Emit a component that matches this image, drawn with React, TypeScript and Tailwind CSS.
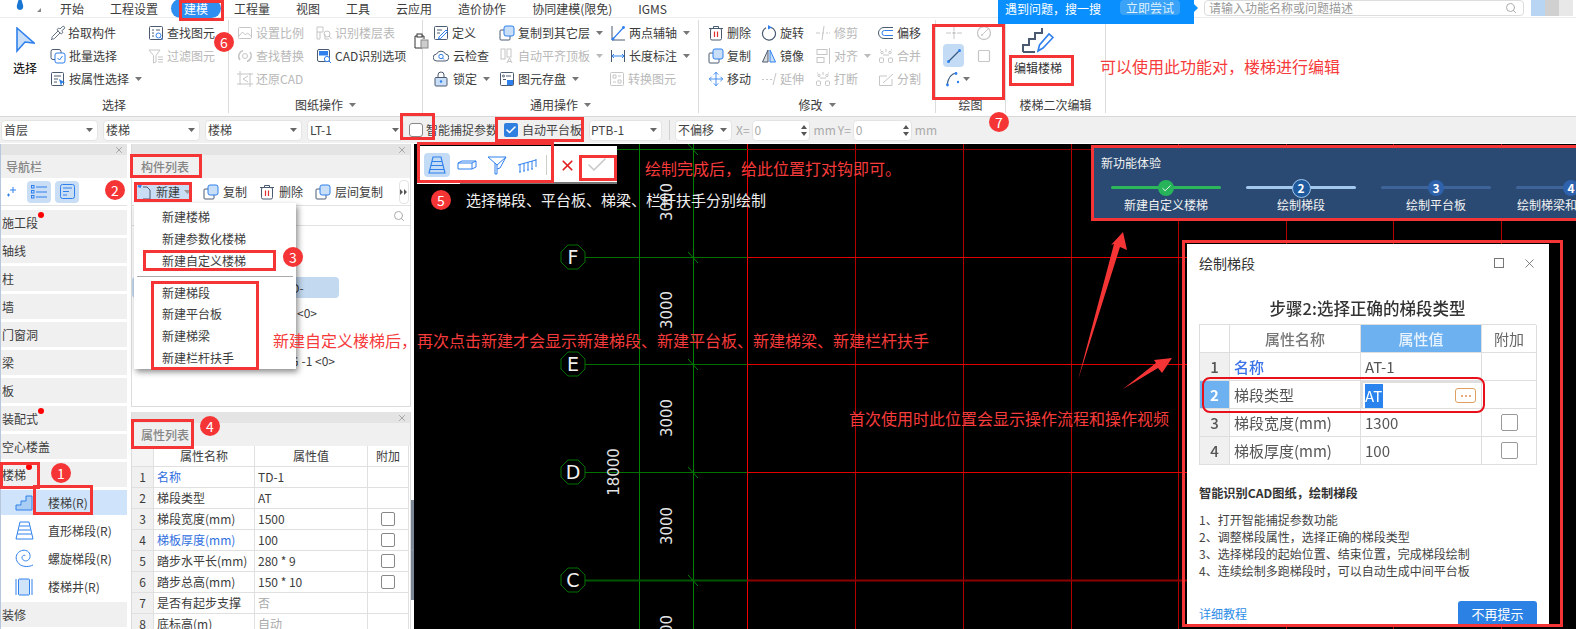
import React from "react";
import { Pipette, Search, X, Check, Move, ChevronRight } from "lucide-react";

const D = "#4a5a70";
const B = "#2f80ed";
const L = "#c9dff8";
const G = "#c6c6c6";

function S({ children, w = 16, h = 16 }: { children?: React.ReactNode; w?: number; h?: number }) {
  return (
    <svg width={w} height={h} viewBox={`0 0 ${w} ${h}`} fill="none" strokeWidth={1} className="shrink-0">
      {children}
    </svg>
  );
}

function Caret({ c = "#777" }: { c?: string }) {
  return (
    <svg width="7" height="4" viewBox="0 0 7 4" className="shrink-0">
      <path d="M0 0h7L3.5 4z" fill={c} />
    </svg>
  );
}

const icons: Record<string, React.ReactNode> = {
  pick: <Pipette size={16} strokeWidth={1.3} color={D} />,
  batch: (
    <S>
      <rect x="1" y="1.5" width="10" height="10" rx="2" stroke={D} />
      <rect x="5" y="5" width="10" height="10" rx="2" stroke={B} fill="#fff" />
      <path d="M7.5 10l2 2 3-4" stroke={B} />
    </S>
  ),
  attr: (
    <S>
      <rect x="1.5" y="1.5" width="12" height="13" rx="1" stroke={D} />
      <path d="M4 5h7M4 8h4M4 11h3" stroke={D} />
      <path d="M9 8l6 3.5-3 .5-1 3z" fill={B} />
    </S>
  ),
  find: (
    <S>
      <rect x="1.5" y="1.5" width="13" height="13" rx="1" stroke={D} />
      <path d="M4 5h2M8 5h4M4 8h2M4 11h2" stroke={D} />
      <circle cx="10.5" cy="10.5" r="2.5" stroke={B} />
      <path d="M12.5 12.5l2 2" stroke={B} />
    </S>
  ),
  filter: (
    <S>
      <path d="M1 2h11L8 7.5V14L5.5 15V7.5z" stroke={G} />
      <path d="M10 9h5M10 11.5h5M10 14h5" stroke={G} />
    </S>
  ),
  scale: (
    <S>
      <rect x="1.5" y="2.5" width="13" height="11" rx="1" stroke={G} />
      <path d="M2 11l3.5-4 3 3 2-2 4 3.5" stroke={G} />
    </S>
  ),
  replace: (
    <S>
      <path d="M3 12A6 6 0 0 1 6 2.5M13 4a6 6 0 0 1-3 9.5" stroke={G} strokeWidth="1.6" />
      <circle cx="8" cy="8" r="2.5" stroke={G} />
    </S>
  ),
  restore: (
    <S>
      <path d="M3 0v14M13 2v14M0 3h16M0 13h16" stroke={G} />
      <path d="M11 5L6 8l5 3" stroke={G} />
    </S>
  ),
  floors: (
    <S>
      <path d="M1 2h6v5H4v7H1zM1 7h3M9 9v5h4" stroke={G} />
      <circle cx="11" cy="9" r="3" stroke={G} />
      <path d="M13 11l2.5 3" stroke={G} />
    </S>
  ),
  cad: (
    <S>
      <rect x="1.5" y="1.5" width="12" height="12" rx="1.5" stroke={D} />
      <rect x="3" y="3" width="9" height="4.5" fill={B} />
      <circle cx="11" cy="11" r="2.6" stroke={B} fill="#fff" />
      <path d="M13 13l2 2" stroke={B} />
    </S>
  ),
  clip: (
    <S>
      <path d="M4 3H2v12h7" stroke="#333" />
      <rect x="4" y="1" width="5" height="3" stroke="#333" />
      <path d="M9 3h2v3" stroke="#333" />
      <rect x="8" y="7" width="7" height="8" fill="#ccc" stroke="#888" />
    </S>
  ),
  define: (
    <S>
      <rect x="1.5" y="1.5" width="13" height="13" rx="1" stroke={D} />
      <path d="M4 5h5M4 8h3" stroke={D} />
      <path d="M6 12l7-7 1.5 1.5-7 7-2 .5z" stroke={B} fill="#fff" />
    </S>
  ),
  cloud: (
    <S>
      <path d="M4 13a3.5 3.5 0 0 1-.5-7A5 5 0 0 1 12.5 6 3.5 3.5 0 0 1 12 13z" stroke={D} />
      <circle cx="8" cy="8.5" r="2.2" stroke={B} />
      <path d="M9.5 10l1.5 1.5" stroke={B} />
    </S>
  ),
  lock: (
    <S>
      <rect x="2" y="6.5" width="12" height="8.5" rx="1" stroke={D} fill={L} />
      <path d="M5 6.5V4a3 3 0 0 1 6 0v2.5" stroke={D} />
      <circle cx="8" cy="10.5" r="1.2" fill={B} />
    </S>
  ),
  copyLayer: (
    <S>
      <rect x="1" y="5" width="10" height="10" rx="1" stroke={D} />
      <rect x="5" y="1" width="10" height="10" rx="2" stroke={B} fill={L} />
    </S>
  ),
  align: (
    <S>
      <rect x="2" y="1" width="4" height="10" stroke={G} />
      <rect x="8" y="1" width="4" height="8" stroke={G} />
      <path d="M8 15l2.5-5 2.5 5M9 13.5h3" stroke={G} />
    </S>
  ),
  save: (
    <S>
      <rect x="1.5" y="1.5" width="13" height="13" rx="1" stroke={D} />
      <circle cx="4.5" cy="5" r="1" stroke={D} />
      <path d="M7 5h5M4 8.5h3" stroke={D} />
      <rect x="8" y="9" width="6" height="5" fill={B} />
    </S>
  ),
  axis: (
    <S>
      <path d="M2 1v14h13" stroke={D} />
      <path d="M2 15L14 2" stroke={B} strokeWidth="1.2" />
      <circle cx="3" cy="14" r="1.4" fill={B} />
      <circle cx="13.5" cy="2.5" r="1.4" fill={B} />
    </S>
  ),
  dim: (
    <S>
      <path d="M1.5 2v12M14.5 2v12" stroke={D} />
      <path d="M2 8h12M4 6L2 8l2 2M12 6l2 2-2 2" stroke={B} />
    </S>
  ),
  convert: (
    <S>
      <rect x="1.5" y="1.5" width="13" height="13" rx="1" stroke={G} />
      <path d="M4 4h3v3H4zM9 9h3v3H9zM9 5h3M4 11h3" stroke={G} />
    </S>
  ),
  del: (
    <S>
      <path d="M1 3.5h14M5.5 3V1.5h5V3" stroke={D} />
      <rect x="2.5" y="3.5" width="11" height="11.5" rx="1.5" stroke={D} />
      <path d="M6.5 6.5v5.5M9.5 6.5v5.5" stroke="#e03030" strokeWidth="1.2" />
    </S>
  ),
  rotate: (
    <S>
      <path d="M10 2.4A6.5 6.5 0 1 1 5 2.8" stroke={D} strokeWidth="1.2" />
      <path d="M7 0l4 2.4-4 2z" fill={B} />
    </S>
  ),
  mirror: (
    <S>
      <path d="M7 2L1.5 14H7z" stroke={D} fill="#ddd" />
      <path d="M9 2l5.5 12H9z" stroke={B} fill={L} />
    </S>
  ),
  trim: (
    <S>
      <path d="M1 8h4M7 8h2" stroke={G} />
      <path d="M9 1L7 15" stroke={G} />
      <path d="M11 8h4" stroke={G} strokeDasharray="2 1" />
    </S>
  ),
  extend: (
    <S>
      <path d="M1 8.5h2M5 8.5h2M9 8.5h2" stroke={G} />
      <path d="M15 2l-3 12" stroke={G} />
    </S>
  ),
  offset: (
    <S>
      <path d="M15 2.5H6a5 5 0 0 0 0 11h9" stroke={D} />
      <path d="M15 5.5H6.5a2 2 0 0 0 0 5H15" stroke={B} />
    </S>
  ),
  alignR: (
    <S>
      <rect x="2" y="1.5" width="10" height="5" stroke={G} />
      <rect x="2" y="9.5" width="7" height="5" stroke={G} />
      <path d="M14.5 0v16" stroke={G} />
    </S>
  ),
  merge: (
    <S>
      <path d="M2 2h1M13 2h1M8 1v3M5 7h6" stroke={G} />
      <rect x="1.5" y="10" width="4" height="4.5" rx="1" stroke={G} />
      <rect x="10.5" y="10" width="4" height="4.5" rx="1" stroke={G} />
      <circle cx="4" cy="4.5" r="1.2" stroke={G} />
      <circle cx="12" cy="4.5" r="1.2" stroke={G} />
    </S>
  ),
  split: (
    <S>
      <path d="M14 8v6.5H1.5V5H9" stroke={G} />
      <path d="M5 12L15 3" stroke={G} />
    </S>
  ),
  gridCross: (
    <S>
      <path d="M0 8h5M11 8h5M8 2v4M8 10v4" stroke={G} />
      <circle cx="8" cy="8" r="1.6" fill={G} />
    </S>
  ),
  gridCircle: (
    <S>
      <circle cx="8" cy="8" r="6.5" stroke={G} strokeWidth="1.3" />
      <path d="M6 10l6-6" stroke={G} />
      <circle cx="6" cy="10" r="1" fill={G} />
    </S>
  ),
  line: (
    <S>
      <path d="M2 14L14 2" stroke="#3a5a80" strokeWidth="1.2" />
      <circle cx="2.5" cy="13.5" r="1.5" fill={B} />
      <circle cx="13.5" cy="2.5" r="1.5" fill={B} />
    </S>
  ),
  rect: (
    <S>
      <path d="M2.5 3.5a1 1 0 0 1 1-1h9a1 1 0 0 1 1 1v9a1 1 0 0 1-1 1h-9a1 1 0 0 1-1-1z" stroke={G} strokeWidth="1.2" />
    </S>
  ),
  arc: (
    <S>
      <path d="M2 14C3 7 6 3 11 2" stroke="#3a5a80" strokeWidth="1.2" />
      <circle cx="2.5" cy="14" r="1.4" fill={B} />
      <circle cx="11" cy="2.5" r="1.4" fill={B} />
      <circle cx="13" cy="11" r="1.2" fill={B} />
    </S>
  ),
};

function Tool({ i, t, gray, caret, gap = 5, cls = "" }: { i: string; t: string; gray?: boolean; caret?: boolean; gap?: number; cls?: string }) {
  return (
    <div className={"flex h-[23px] items-center whitespace-nowrap " + cls}>
      {i === "move" ? <Move size={16} strokeWidth={1.3} color={B} className="shrink-0" /> : icons[i]}
      <span style={{ marginLeft: gap }} className={gray ? "text-[#b8b8b8]" : "text-[#3c3c3c]"}>
        {t}
      </span>
      {caret && (
        <span className="ml-[6px]">
          <Caret c={gray ? "#bbb" : "#777"} />
        </span>
      )}
    </div>
  );
}

function Col({ children, cls = "" }: { children: React.ReactNode; cls?: string }) {
  return <div className={"flex flex-col shrink-0 " + cls}>{children}</div>;
}

function Group({ w, label, caret, children, noBorder }: { w: string; label: string; caret?: boolean; children: React.ReactNode; noBorder?: boolean }) {
  return (
    <div className={"flex h-[93px] flex-col justify-between pt-[1px] shrink-0 " + w + (noBorder ? "" : " border-r border-[#dcdcdc]")}>
      <div className="flex">{children}</div>
      <div className="flex h-[16px] items-center justify-center gap-[6px] text-[#3c3c3c]">
        <span>{label}</span>
        {caret && <Caret />}
      </div>
    </div>
  );
}

function TabBar() {
  const tabs = ["开始", "工程设置", "建模", "工程量", "视图", "工具", "云应用", "造价协作", "协同建模(限免)", "IGMS"];
  return (
    <div className="relative flex h-[18px] shrink-0 items-center border-b border-[#ececec] bg-white">
      <div className="ml-[15px] flex w-[45px] items-start self-start">
        <svg width="10" height="10" viewBox="0 0 10 10" className="shrink-0">
          <path d="M5 10C2 10 1.500 7 2 5L3.500 0h3L8 5c.5 2 0 5-3 5z" fill="#1976d2" />
        </svg>
        <svg width="4" height="4" viewBox="0 0 4 4" className="mt-[8px] ml-[12px]">
          <path d="M4 0v4H0z" fill="#888" />
        </svg>
      </div>
      <div className="flex items-center gap-[26px] text-[#3c3c3c]">
        {tabs.map((t) =>
          t === "建模" ? (
            <span key={t} className="-mx-[13px] flex h-[19px] items-center rounded-full bg-[#2e8ff0] px-[13px] text-white">
              {t}
            </span>
          ) : (
            <span key={t} className="whitespace-nowrap">
              {t}
            </span>
          )
        )}
      </div>
      <div className="ml-auto flex h-[18px] items-start self-start">
        <div className="relative z-10 flex h-[24px] w-[196px] items-start bg-[#0a8fff] pl-[7px] text-white">
          <span className="whitespace-nowrap pt-[1px] text-[12px]">遇到问题，搜一搜</span>
          <span className="ml-[19px] flex h-[15px] w-[60px] items-center justify-center rounded-sm bg-[#3aa3f8] text-[#dff0ff]">立即尝试</span>
          <svg width="4" height="8" viewBox="0 0 4 8" className="absolute -right-[4px] top-[4px]">
            <path d="M0 0l4 4-4 4z" fill="#0a8fff" />
          </svg>
        </div>
        <div className="ml-[10px] flex h-[16px] w-[320px] items-center justify-between rounded-sm border border-[#ddd] bg-white px-[4px] text-[#999]">
          <span>请输入功能名称或问题描述</span>
          <Search size={12} color="#aaa" className="mr-[2px]" />
        </div>
        <div className="ml-[7px] mr-[3px] flex h-[16px] w-[42px]">
          <div className="h-full w-[14px] bg-[#b8d6f4]" />
          <div className="h-full w-[14px] bg-[#d0d0d0]" />
          <div className="h-full w-[14px] bg-[#e8e8e8]" />
        </div>
      </div>
    </div>
  );
}

function Ribbon() {
  return (
    <div className="flex h-[99px] shrink-0 border-b border-[#d8d8d8] bg-white pt-[2px]">
      <Group w="w-[229px]" label="选择">
        <Col cls="ml-[13px] w-[24px] items-center pt-[6px]">
          <svg width="20" height="26" viewBox="0 0 20 26">
            <path d="M2 1l17 15-9-1-8 9z" fill={L} stroke={B} strokeWidth="1.6" />
          </svg>
          <span className="mt-[7px] whitespace-nowrap">选择</span>
        </Col>
        <Col cls="ml-[13px] w-[98px]">
          <Tool i="pick" t="拾取构件" gap={2} />
          <Tool i="batch" t="批量选择" gap={3} />
          <Tool i="attr" t="按属性选择" gap={3} caret />
        </Col>
        <Col>
          <Tool i="find" t="查找图元" gap={3} />
          <Tool i="filter" t="过滤图元" gray gap={3} />
        </Col>
      </Group>
      <Group w="w-[194px]" label="图纸操作" caret>
        <Col cls="ml-[8px] w-[79px]">
          <Tool i="scale" t="设置比例" gray gap={3} />
          <Tool i="replace" t="查找替换" gray gap={3} />
          <Tool i="restore" t="还原CAD" gray gap={3} />
        </Col>
        <Col>
          <Tool i="floors" t="识别楼层表" gray gap={3} />
          <Tool i="cad" t="CAD识别选项" gap={3} />
        </Col>
      </Group>
      <div className="relative h-0 w-0">
        <span className="absolute -left-[10px] top-[13px]">{icons.clip}</span>
      </div>
      <Group w="w-[276px]" label="通用操作" caret>
        <Col cls="ml-[10px] w-[66px]">
          <Tool i="define" t="定义" gap={3} />
          <Tool i="cloud" t="云检查" gap={4} />
          <Tool i="lock" t="锁定" gap={4} caret />
        </Col>
        <Col cls="w-[111px]">
          <Tool i="copyLayer" t="复制到其它层" gap={3} caret />
          <Tool i="align" t="自动平齐顶板" gray gap={3} caret />
          <Tool i="save" t="图元存盘" gap={3} caret />
        </Col>
        <Col>
          <Tool i="axis" t="两点辅轴" gap={3} caret />
          <Tool i="dim" t="长度标注" gap={3} caret />
          <Tool i="convert" t="转换图元" gray gap={3} cls="-ml-[1px]" />
        </Col>
      </Group>
      <Group w="w-[237px]" label="修改" caret>
        <Col cls="ml-[9px] w-[53px]">
          <Tool i="del" t="删除" gap={3} />
          <Tool i="copyLayer" t="复制" gap={3} />
          <Tool i="move" t="移动" gap={3} />
        </Col>
        <Col cls="w-[54px]">
          <Tool i="rotate" t="旋转" gap={3} />
          <Tool i="mirror" t="镜像" gap={3} />
          <Tool i="extend" t="延伸" gray gap={3} />
        </Col>
        <Col cls="w-[63px]">
          <Tool i="trim" t="修剪" gray gap={3} />
          <Tool i="alignR" t="对齐" gray gap={3} caret />
          <Tool i="merge" t="打断" gray gap={3} />
        </Col>
        <Col>
          <Tool i="offset" t="偏移" gap={3} />
          <Tool i="merge" t="合并" gray gap={3} />
          <Tool i="split" t="分割" gray gap={3} />
        </Col>
      </Group>
      <Group w="w-[70px]" label="绘图">
        <Col cls="ml-[7px] w-[33px]">
          <div className="flex h-[23px] w-[21px] items-center justify-center">{icons.gridCross}</div>
          <div className="flex h-[23px] w-[21px] items-center justify-center rounded-sm bg-[#c3dbf5]">{icons.line}</div>
          <div className="flex h-[23px] items-center gap-[2px] pl-[2px]">
            {icons.arc}
            <Caret />
          </div>
        </Col>
        <Col>
          <div className="flex h-[23px] w-[16px] items-center">{icons.gridCircle}</div>
          <div className="flex h-[23px] w-[16px] items-center">{icons.rect}</div>
        </Col>
      </Group>
      <Group w="w-[100px]" label="楼梯二次编辑">
        <Col cls="w-[64px] items-center pt-[6px]">
          <svg width="32" height="26" viewBox="0 0 32 26" fill="none">
            <path d="M1 25v-7h6v-6h6V6h7V1" stroke={D} strokeWidth="2" />
            <path d="M1 25h12" stroke={D} strokeWidth="2" />
            <path d="M16 24l1.500-6L27 7l4 3.500L21 21z" fill="#fff" stroke={B} strokeWidth="1.6" />
          </svg>
          <span className="mt-[7px] whitespace-nowrap text-[#333]">编辑楼梯</span>
        </Col>
      </Group>
    </div>
  );
}

function Sel({ t, w, tight }: { t: string; w: string; tight?: boolean }) {
  return (
    <div className={"flex h-[21px] items-center justify-between rounded-sm border border-[#e4e4e4] bg-white pr-[4px] text-[#444] " + w + (tight ? " pl-[1px]" : " pl-[2px]")}>
      <span className="whitespace-nowrap">{t}</span>
      <Caret c="#666" />
    </div>
  );
}

function Spin({ w }: { w: string }) {
  return (
    <div className={"flex h-[21px] items-center justify-between rounded-sm border border-[#e4e4e4] bg-white px-[2px] text-[#aaa] " + w}>
      <span>0</span>
      <div className="flex flex-col gap-[3px]">
        <svg width="6" height="4" viewBox="0 0 6 4"><path d="M3 0l3 4H0z" fill="#555" /></svg>
        <svg width="6" height="4" viewBox="0 0 6 4"><path d="M0 0h6L3 4z" fill="#555" /></svg>
      </div>
    </div>
  );
}

function OptionBar() {
  return (
    <div className="flex h-[26px] shrink-0 items-center bg-[#f0f0f0] pl-[1px] text-[#444]">
      <div className="flex gap-[5px]">
        <Sel t="首层" w="w-[97px]" />
        <Sel t="楼梯" w="w-[97px]" />
        <Sel t="楼梯" w="w-[97px]" />
        <Sel t="LT-1" w="w-[97px]" />
      </div>
      <div className="ml-[5px] h-[14px] w-[14px] rounded-[3px] border border-[#888] bg-white" />
      <span className="ml-[3px] whitespace-nowrap">智能捕捉参数</span>
      <div className="ml-[6px] flex h-[14px] w-[14px] items-center justify-center rounded-[2px] bg-[#2f7fe0]">
        <Check size={12} color="#fff" strokeWidth={3} />
      </div>
      <span className="ml-[4px] whitespace-nowrap">自动平台板</span>
      <div className="ml-[7px]">
        <Sel t="PTB-1" w="w-[73px]" tight />
      </div>
      <div className="ml-[7px] h-[20px] w-px bg-[#d0d0d0]" />
      <div className="ml-[5px]">
        <Sel t="不偏移" w="w-[57px]" />
      </div>
      <span className="ml-[4px] text-[#aaa]">X=</span>
      <div className="ml-[2px]"><Spin w="w-[58px]" /></div>
      <span className="ml-[4px] text-[#aaa]">mm</span>
      <span className="ml-[2px] text-[#aaa]">Y=</span>
      <div className="ml-[2px]"><Spin w="w-[59px]" /></div>
      <span className="ml-[3px] text-[#aaa]">mm</span>
    </div>
  );
}

function PanelHead({ t }: { t: string }) {
  return (
    <>
      <div className="flex h-[11px] shrink-0 items-center justify-end bg-[#e4e4e4] pr-[3px]">
        <X size={10} color="#999" />
      </div>
      <div className="flex h-[23px] shrink-0 items-center bg-[#f0f0f0] pl-[9px] font-medium text-[#868686]">{t}</div>
    </>
  );
}

function NavItem({ t, dot }: { t: string; dot?: string }) {
  return (
    <div className="relative mb-[3px] flex h-[25px] shrink-0 items-center bg-[#f0f0f0] pl-[1px] text-[#3c3c3c]">
      {t}
      {dot && <span className={"absolute top-[2px] h-[6px] w-[6px] rounded-full bg-[#f00] " + dot} />}
    </div>
  );
}

function SubItem({ t, children, active }: { t: string; children: React.ReactNode; active?: boolean }) {
  return (
    <div className={"mb-[3px] flex h-[25px] shrink-0 items-center pl-[14px] text-[#3c3c3c] " + (active ? "bg-[#cfe4fa]" : "")}>
      <div className="flex w-[33px] items-center">{children}</div>
      {t}
    </div>
  );
}

function Nav() {
  return (
    <div className="flex w-[127px] shrink-0 flex-col overflow-hidden border-l border-[#b8c8dc]">
      <div className="flex h-[11px] shrink-0 items-center justify-end bg-[#e4e4e4] pr-[3px]">
        <X size={10} color="#999" />
      </div>
      <div className="flex h-[23px] shrink-0 items-center bg-[#f0f0f0] pl-[5px] font-medium text-[#868686]">导航栏</div>
      <div className="flex h-[28px] shrink-0 items-center border-b border-[#e2e2e2] pl-[6px]">
        <svg width="10" height="10" viewBox="0 0 10 10" fill="none">
          <path d="M6 0v6M3 3h6M1.500 6.500v3M0 8h3" stroke={B} />
        </svg>
        <div className="ml-[10px] flex h-[22px] w-[24px] items-center justify-center rounded-sm bg-[#c9def5]">
          <svg width="16" height="14" viewBox="0 0 16 14" fill="none">
            <path d="M5 2h11M5 7h11M5 12h11" stroke={B} />
            <rect x="0.500" y="0.500" width="2.500" height="2.500" stroke={B} />
            <rect x="0.500" y="5.500" width="2.500" height="2.500" stroke={B} />
            <rect x="0.500" y="10.500" width="2.500" height="2.500" stroke={B} />
          </svg>
        </div>
        <div className="ml-[4px] flex h-[22px] w-[24px] items-center justify-center rounded-sm bg-[#c9def5]">
          <svg width="15" height="15" viewBox="0 0 15 15" fill="none">
            <rect x="0.500" y="0.500" width="14" height="14" rx="2" stroke={B} />
            <path d="M3 4h9M3 7.500h6M3 11h4" stroke={B} />
          </svg>
        </div>
      </div>
      <div className="h-[4px] shrink-0" />
      <NavItem t="施工段" dot="left-[37px]" />
      <NavItem t="轴线" />
      <NavItem t="柱" />
      <NavItem t="墙" />
      <NavItem t="门窗洞" />
      <NavItem t="梁" />
      <NavItem t="板" />
      <NavItem t="装配式" dot="left-[37px]" />
      <NavItem t="空心楼盖" />
      <NavItem t="楼梯" dot="left-[25px]" />
      <SubItem t="楼梯(R)" active>
        <svg width="18" height="16" viewBox="0 0 18 16" fill="none">
          <path d="M1 15v-5h5V6h5V1h6v14z" fill="#a9cdf3" stroke={B} />
        </svg>
      </SubItem>
      <SubItem t="直形梯段(R)">
        <svg width="19" height="19" viewBox="0 0 19 19" fill="none">
          <path d="M5 1h9l4 17H1zM4.500 5h10M3.500 9h12M2.500 13h14" stroke={B} />
        </svg>
      </SubItem>
      <SubItem t="螺旋梯段(R)">
        <svg width="19" height="19" viewBox="0 0 19 19" fill="none">
          <path d="M18 16c-4 2-9 2-12.500 0C1 13 0 8 2.500 4.500 5 1 10.500 0 13.500 3c2.500 2.500 2 7-1 8.500-2.500 1.200-5.500-.5-5.500-3 0-2 2.500-3 3.500-1.500" stroke={B} />
        </svg>
      </SubItem>
      <SubItem t="楼梯井(R)">
        <svg width="18" height="18" viewBox="0 0 18 18" fill="none">
          <path d="M1 1v16M17 1v16" stroke={B} />
          <rect x="3.500" y="1" width="11" height="16" rx="1" fill="#cfe3f9" stroke={B} />
        </svg>
      </SubItem>
      <NavItem t="装修" />
    </div>
  );
}

function ComponentPanel() {
  return (
    <div className="flex h-[263px] shrink-0 flex-col border-x border-b border-[#dcdcdc]">
      <PanelHead t="构件列表" />
      <div className="flex h-[28px] shrink-0 items-center border-b border-[#e2e2e2] pl-[5px] text-[#3c3c3c]">
        <div className="flex h-[19px] w-[54px] shrink-0 items-center whitespace-nowrap rounded-sm bg-[#c9def5]">
          <svg width="14" height="16" viewBox="0 0 14 16" fill="none" className="shrink-0">
            <path d="M6 3h4l3 3v9H6" stroke={D} />
            <path d="M3 1l1 1.500M1 2l3 1" stroke={B} strokeWidth="2" />
          </svg>
          <span className="ml-[5px]">新建</span>
          <span className="ml-[4px]"><Caret c="#999" /></span>
        </div>
        <div className="ml-[12px] flex items-center">
          {icons.copyLayer}
          <span className="ml-[4px]">复制</span>
        </div>
        <div className="ml-[12px] flex items-center">
          {icons.del}
          <span className="ml-[4px]">删除</span>
        </div>
        <div className="ml-[12px] flex items-center">
          {icons.copyLayer}
          <span className="ml-[4px]">层间复制</span>
        </div>
        <div className="ml-[16px] flex h-[24px] w-[10px] items-center justify-center rounded-sm border border-[#e4e4e4] text-[#555]">
          <svg width="8" height="6" viewBox="0 0 8 6"><path d="M0 0l3 3-3 3zM4 0l3 3-3 3z" fill="#555" /></svg>
        </div>
      </div>
      <div className="flex h-[20px] shrink-0 items-center justify-end border-b border-[#e2e2e2] pr-[5px]">
        <Search size={12} color="#aaa" />
      </div>
      <div className="flex flex-col pt-[3px] text-[#3c3c3c]">
        <div className="h-[24px] w-[120px] pl-[20px] leading-[24px]">楼梯</div>
        <div className="h-[24px] w-[120px] pl-[30px] leading-[24px]">LT-1</div>
        <div className="flex h-[24px] items-start">
          <div className="h-[21px] w-[207px] rounded-sm bg-[#c3d9f0] pl-[152px] leading-[21px]">TD-</div>
        </div>
        <div className="h-[24px] w-[185px] text-right leading-[24px]">{"PTB-1 <0>"}</div>
        <div className="h-[24px] w-[120px] pl-[30px] leading-[24px]">TL-1</div>
        <div className="h-[24px] w-[203px] text-right leading-[24px]">
          <span className="mr-[3px]">LG</span>
          {"-1 <0>"}
        </div>
      </div>
    </div>
  );
}

function PropPanel() {
  const rows: [string, string, string?, boolean?, boolean?][] = [
    ["1", "名称", "TD-1", false, true],
    ["2", "梯段类型", "AT"],
    ["3", "梯段宽度(mm)", "1500", true],
    ["4", "梯板厚度(mm)", "100", true, true],
    ["5", "踏步水平长(mm)", "280 * 9", true],
    ["6", "踏步总高(mm)", "150 * 10", true],
    ["7", "是否有起步支撑", "否"],
    ["8", "底标高(m)", "自动"],
  ];
  return (
    <div className="mt-[5px] flex min-h-0 flex-1 flex-col overflow-hidden border-x border-[#dcdcdc]">
      <PanelHead t="属性列表" />
      <div className="grid w-[277px] grid-cols-[22px_101px_113px_41px] auto-rows-[21px] text-[#3c3c3c]">
        <div className="border-b border-r border-[#e0e0e0] bg-[#f4f4f4]" />
        <div className="flex items-center justify-center border-b border-r border-[#e0e0e0]">属性名称</div>
        <div className="flex items-center justify-center border-b border-r border-[#e0e0e0]">属性值</div>
        <div className="flex items-center justify-center border-b border-r border-[#e0e0e0]">附加</div>
        {rows.map(([n, a, v, chk, blue]) => (
          <React.Fragment key={n}>
            <div className="flex items-center justify-center border-b border-r border-[#e0e0e0] bg-[#f0f0f0]">{n}</div>
            <div className={"flex items-center whitespace-nowrap border-b border-r border-[#e0e0e0] pl-[3px] " + (blue ? "text-[#2f6fe0]" : "")}>{a}</div>
            <div className={"flex items-center border-b border-r border-[#e0e0e0] pl-[3px] " + (n === "7" || n === "8" ? "text-[#aaa]" : "")}>{v}</div>
            <div className="flex items-center justify-center border-b border-r border-[#e0e0e0]">
              {chk && <span className="h-[14px] w-[14px] rounded-[2px] border border-[#888] bg-white" />}
            </div>
          </React.Fragment>
        ))}
      </div>
    </div>
  );
}

function Canvas() {
  const vs = [855, 963, 1071, 1178, 1286, 1393, 1501];
  const hs = [149, 257, 364, 472, 580];
  const dim = [
    ["3000", 202],
    ["3000", 310],
    ["3000", 418],
    ["3000", 526],
    ["3000", 634],
  ] as const;
  const labels: [string, number][] = [["F", 257], ["E", 364], ["D", 472], ["C", 580]];
  return (
    <svg width="1162" height="485" viewBox="414 144 1162 485" className="absolute inset-0 block">
      <rect x="414" y="144" width="1162" height="485" fill="#000" />
      <path d="M639.500 144V629M693.500 144V629" stroke="#008000" />
      <path d="M747.500 144V629" stroke="#f00000" />
      {vs.map((x) => (
        <path key={x} d={`M${x + 0.5} 144V629`} stroke="#b30000" />
      ))}
      {hs.map((y, i) => (
        <g key={y}>
          <path d={`M${i === 0 ? 560 : 585} ${y + 0.5}H747`} stroke={i === 4 ? "#005500" : "#007000"} strokeWidth={i === 4 ? 2 : 1} />
          <path d={`M747 ${y + 0.5}H1501`} stroke={i === 4 || i === 0 ? "#8b0000" : "#e00000"} strokeWidth={i === 4 ? 2 : 1} />
          <path d={`M688 ${y - 5}L698 ${y + 6}`} stroke="#008000" />
        </g>
      ))}
      {labels.map(([t, y]) => (
        <g key={t}>
          <polygon
            points={`${573 - 5},${y - 12} ${573 + 5},${y - 12} ${573 + 12},${y - 5} ${573 + 12},${y + 5} ${573 + 5},${y + 12} ${573 - 5},${y + 12} ${573 - 12},${y + 5} ${573 - 12},${y - 5}`}
            fill="none"
            stroke="#007000"
          />
          <text x="573" y={y + 7} textAnchor="middle" fill="#f0f0f0" fontSize="19" fontFamily="'DejaVu Sans', sans-serif">
            {t}
          </text>
        </g>
      ))}
      {dim.map(([t, y]) => (
        <text key={y} transform={`translate(672 ${y}) rotate(-90)`} textAnchor="middle" fill="#e4e4e4" fontSize="15" fontFamily="'DejaVu Sans', sans-serif">
          {t}
        </text>
      ))}
      <text transform="translate(619 472) rotate(-90)" textAnchor="middle" fill="#e4e4e4" fontSize="15" fontFamily="'DejaVu Sans', sans-serif">
        18000
      </text>
    </svg>
  );
}

function FloatBar() {
  return (
    <div className="absolute left-[3px] top-[2px] flex h-[38px] w-[200px] items-center bg-white pl-[7px]">
      <div className="flex h-[24px] w-[26px] items-center justify-center rounded-sm bg-[#c3dbf5]">
        <svg width="20" height="20" viewBox="0 0 20 20" fill="none">
          <path d="M6 2h8l4 16H2zM5 6.500h10M4 10.500h12M3 14.500h14" stroke={B} strokeWidth="1.100" />
        </svg>
      </div>
      <svg width="20" height="10" viewBox="0 0 20 10" fill="none" className="ml-[7px]">
        <path d="M1 3h14v6H1zM1 3l4-2h14l-4 2M15 9l4-2V1" stroke={B} />
      </svg>
      <svg width="20" height="20" viewBox="0 0 20 20" fill="none" className="ml-[10px]">
        <path d="M1 2h18l-9 8v9L8 19M10 10L1 2M8 8v11M19 2l-6 11-3 1" stroke={B} />
      </svg>
      <svg width="20" height="16" viewBox="0 0 20 16" fill="none" className="ml-[10px]">
        <path d="M1 8l18-5M3 7v8M7 6v8M11 5v8M15 4v8M19 2v8M2 15h2M6 14h2M10 13h2M14 12h2" stroke={B} />
      </svg>
      <div className="ml-[9px] h-[20px] w-px bg-[#ccc]" />
      <X size={17} color="#e02020" strokeWidth={2.4} className="ml-[12px]" />
      <Check size={24} color="#c8c8c8" strokeWidth={1.6} className="ml-[9px]" />
      <div className="absolute bottom-0 right-0 h-[2px] w-[157px] bg-[#777]" />
    </div>
  );
}

function Feature() {
  const steps = [
    { n: "", t: "新建自定义楼梯", line: "bg-[#2cb85a]" },
    { n: "2", t: "绘制梯段", line: "bg-[#a3c8ee]" },
    { n: "3", t: "绘制平台板", line: "bg-[#3f6499]" },
    { n: "4", t: "绘制梯梁和栏杆扶手", line: "bg-[#3f6499]" },
  ];
  return (
    <div className="absolute left-[677px] right-0 top-[1px] h-[76px] overflow-hidden border-[3px] border-r-0 border-[#f53535] bg-[#2a4a73] pl-[7px] pt-[6px] text-[#f2f2f2]">
      <div className="h-[18px] leading-[18px]">新功能体验</div>
      <div className="flex h-[47px] w-[560px] pl-[10px] pt-[8px]">
        {steps.map((s, i) => (
          <div key={i} className="flex w-[135px] shrink-0 flex-col">
            <div className="relative flex h-[16px] w-[110px] items-center justify-center">
              <div className={"absolute inset-x-0 top-[6px] h-[3px] rounded-sm " + s.line} />
              {i === 0 ? (
                <span className="relative flex h-[16px] w-[16px] items-center justify-center rounded-full bg-[#27b35a]">
                  <Check size={11} color="#fff" strokeWidth={2} />
                </span>
              ) : i === 1 ? (
                <span className="relative flex h-[19px] w-[19px] items-center justify-center rounded-full border border-[#a3c8ee] bg-[#1f5a9e] font-bold text-white">{s.n}</span>
              ) : (
                <span className="relative flex h-[16px] w-[16px] items-center justify-center rounded-full bg-[#2f62ad] font-bold text-white">{s.n}</span>
              )}
            </div>
            <div className="mt-[1px] flex w-[110px] justify-center whitespace-nowrap">{s.t}</div>
          </div>
        ))}
      </div>
    </div>
  );
}

function Dialog() {
  const cell = "flex items-center border-b border-r border-[#dedede]";
  const Chk = <span className="h-[17px] w-[17px] rounded-[2px] border-[1.5px] border-[#999]" />;
  return (
    <div className="absolute left-[773px] top-[100px] flex h-[381px] w-[362px] flex-col overflow-hidden bg-white px-[12px] pt-[11px] text-[#333]">
      <div className="flex h-[16px] items-center justify-between leading-[16px]">
        <span className="text-[14px] text-[#333]">绘制梯段</span>
        <div className="flex items-center gap-[18px]">
          <span className="h-[10px] w-[10px] border border-[#777]" />
          <X size={15} color="#666" strokeWidth={1.3} />
        </div>
      </div>
      <div className="mt-[26px] flex h-[168px] w-[337px] flex-col blur-[0.35px]">
        <div className="flex h-[29px] items-start justify-center text-[16.5px] font-medium leading-[22px] text-[#333]">步骤2:选择正确的梯段类型</div>
        <div className="grid grid-cols-[30px_131px_121px_55px] auto-rows-[28px] border-t border-l border-[#dedede] text-[15px] text-[#555]">
          <div className={cell + " bg-white"} />
          <div className={cell + " justify-center font-medium text-[#777]"}>属性名称</div>
          <div className={cell + " justify-center bg-[#6db1f0] font-medium text-[#e8f3fd]"}>属性值</div>
          <div className={cell + " justify-center text-[#666]"}>附加</div>
          <div className={cell + " justify-center bg-[#f0f0f0] font-medium"}>1</div>
          <div className={cell + " pl-[4px] font-medium text-[#3a72e8]"}>名称</div>
          <div className={cell + " pl-[4px]"}>AT-1</div>
          <div className={cell} />
          <div className={cell + " justify-center bg-[#6db1f0] font-bold text-white"}>2</div>
          <div className={cell + " pl-[4px]"}>梯段类型</div>
          <div className={cell + " justify-between border-2 border-[#6fb0ec] pl-[2px] pr-[5px]"}>
            <span className="bg-[#2b84ee] pr-[1px] leading-[24px] text-white">AT</span>
            <span className="flex h-[15px] w-[21px] items-center justify-center gap-[2px] rounded-[3px] border border-[#e0a060]">
              <i className="h-[2px] w-[2px] rounded-full bg-[#e09050]" />
              <i className="h-[2px] w-[2px] rounded-full bg-[#e09050]" />
              <i className="h-[2px] w-[2px] rounded-full bg-[#e09050]" />
            </span>
          </div>
          <div className={cell} />
          <div className={cell + " justify-center bg-[#f0f0f0] font-medium"}>3</div>
          <div className={cell + " pl-[4px]"}>梯段宽度(mm)</div>
          <div className={cell + " pl-[4px]"}>1300</div>
          <div className={cell + " justify-center"}>{Chk}</div>
          <div className={cell + " justify-center bg-[#f0f0f0] font-medium"}>4</div>
          <div className={cell + " pl-[4px]"}>梯板厚度(mm)</div>
          <div className={cell + " pl-[4px]"}>100</div>
          <div className={cell + " justify-center"}>{Chk}</div>
        </div>
      </div>
      <div className="mt-[20px] text-[12.2px] font-bold text-[#333]">智能识别CAD图纸，绘制梯段</div>
      <div className="mt-[10px] flex flex-col leading-[17px] text-[#444]">
        <span>1、打开智能捕捉参数功能</span>
        <span>2、调整梯段属性，选择正确的梯段类型</span>
        <span>3、选择梯段的起始位置、结束位置，完成梯段绘制</span>
        <span>4、连续绘制多跑梯段时，可以自动生成中间平台板</span>
      </div>
      <div className="mt-[22px] flex items-start justify-between">
        <span className="mt-[5px] text-[#2e8de6]">详细教程</span>
        <span className="flex h-[25px] w-[79px] items-center justify-center rounded-[3px] bg-[#2b82e4] text-[13px] text-white">不再提示</span>
      </div>
    </div>
  );
}

const RB = "absolute border-[3px] border-[#f53535] pointer-events-none";
const NUM = "absolute flex h-[20px] w-[20px] items-center justify-center rounded-full bg-[#f53535] text-[14px] leading-none text-white";
const NOTE = "absolute whitespace-nowrap text-[16px] leading-[22px] text-[#f53b3b]";

function Menu() {
  const Item = ({ t }: { t: string }) => <div className="flex h-[22px] items-center pl-[28px] text-[#3c3c3c]">{t}</div>;
  return (
    <div className="absolute left-[134px] top-[203px] flex h-[166px] w-[162px] flex-col bg-white pt-[3px] shadow-[2px_3px_6px_rgba(0,0,0,0.45)]">
      <Item t="新建楼梯" />
      <Item t="新建参数化楼梯" />
      <Item t="新建自定义楼梯" />
      <div className="mx-[3px] my-[4px] h-px bg-[#aaa]" />
      <div className="h-[1px]" />
      <Item t="新建梯段" />
      <Item t="新建平台板" />
      <Item t="新建梯梁" />
      <Item t="新建栏杆扶手" />
    </div>
  );
}

export default function App() {
  return (
    <div className="relative flex h-[629px] w-[1576px] flex-col overflow-hidden bg-white text-[12px] leading-[16px] [font-family:'Noto_Sans_CJK_SC',sans-serif]">
      <TabBar />
      <Ribbon />
      <OptionBar />
      <div className="flex h-[486px] shrink-0 bg-white pt-[1px]">
        <Nav />
        <div className="ml-[4px] flex w-[280px] shrink-0 flex-col">
          <ComponentPanel />
          <PropPanel />
        </div>
        <div className="w-[3px] shrink-0">
          <div className="mt-[356px] flex h-[100px] items-center justify-center bg-[#7b8794]">
            <ChevronRight size={6} color="#ccc" className="rotate-180" />
          </div>
        </div>
        <div className="relative flex-1 overflow-hidden">
          <Canvas />
          <FloatBar />
          <Feature />
          <Dialog />
          <div className="absolute left-[768px] top-[96px] h-[387px] w-[381px] border-[3px] border-[#f53535]" />
          <div className="absolute left-[788px] top-[233px] h-[36px] w-[283px] rounded-[8px] border-2 border-[#e8101a]" />
        </div>
      </div>

      <Menu />

      <svg width="1576" height="629" viewBox="0 0 1576 629" className="pointer-events-none absolute inset-0">
        <polygon points="1123,232 1127,250 1120,247 1078,380 1114,244 1111,245" fill="#f53535" />
        <polygon points="1172,358 1162,373 1158,368 1123,389 1156,363 1154,360" fill="#f53535" />
      </svg>

      <div className={RB + " left-[179px] top-0 h-[21px] w-[45px]"} />
      <div className={RB + " left-[400px] top-[113px] h-[27px] w-[35px]"} />
      <div className={RB + " left-[495px] top-[117px] h-[25px] w-[89px]"} />
      <div className={RB + " left-[932px] top-[24px] h-[76px] w-[73px]"} />
      <div className={RB + " left-[1009px] top-[55px] h-[31px] w-[65px]"} />
      <div className={RB + " left-[130px] top-[154px] h-[24px] w-[72px]"} />
      <div className={RB + " left-[134px] top-[182px] h-[20px] w-[58px]"} />
      <div className={RB + " left-[143px] top-[250px] h-[21px] w-[133px]"} />
      <div className={RB + " left-[151px] top-[281px] h-[89px] w-[108px]"} />
      <div className={RB + " left-[131px] top-[419px] h-[30px] w-[63px]"} />
      <div className={RB + " left-0 top-[462px] h-[27px] w-[40px]"} />
      <div className={RB + " left-[33px] top-[485px] h-[30px] w-[60px]"} />
      <div className={RB + " left-[417px] top-[142px] h-[41px] w-[137px]"} />
      <div className={RB + " left-[579px] top-[155px] h-[26px] w-[38px]"} />

      <div className={NUM + " left-[214px] top-[32px]"}>6</div>
      <div className={NUM + " left-[989px] top-[112px]"}>7</div>
      <div className={NUM + " left-[105px] top-[180px]"}>2</div>
      <div className={NUM + " left-[283px] top-[247px]"}>3</div>
      <div className={NUM + " left-[200px] top-[416px]"}>4</div>
      <div className={NUM + " left-[51px] top-[463px]"}>1</div>
      <div className={NUM + " left-[431px] top-[190px]"}>5</div>

      <div className={NOTE + " left-[1100px] top-[55px]"}>可以使用此功能对，楼梯进行编辑</div>
      <div className={NOTE + " left-[645px] top-[157px]"}>绘制完成后，给此位置打对钩即可。</div>
      <div className={NOTE + " left-[273px] top-[329px]"}>新建自定义楼梯后，再次点击新建才会显示新建梯段、新建平台板、新建梯梁、新建栏杆扶手</div>
      <div className={NOTE + " left-[849px] top-[407px]"}>首次使用时此位置会显示操作流程和操作视频</div>
      <div className="absolute left-[466px] top-[190px] whitespace-nowrap text-[15px] leading-[20px] text-[#eeeeee]">选择梯段、平台板、梯梁、栏杆扶手分别绘制</div>
    </div>
  );
}
